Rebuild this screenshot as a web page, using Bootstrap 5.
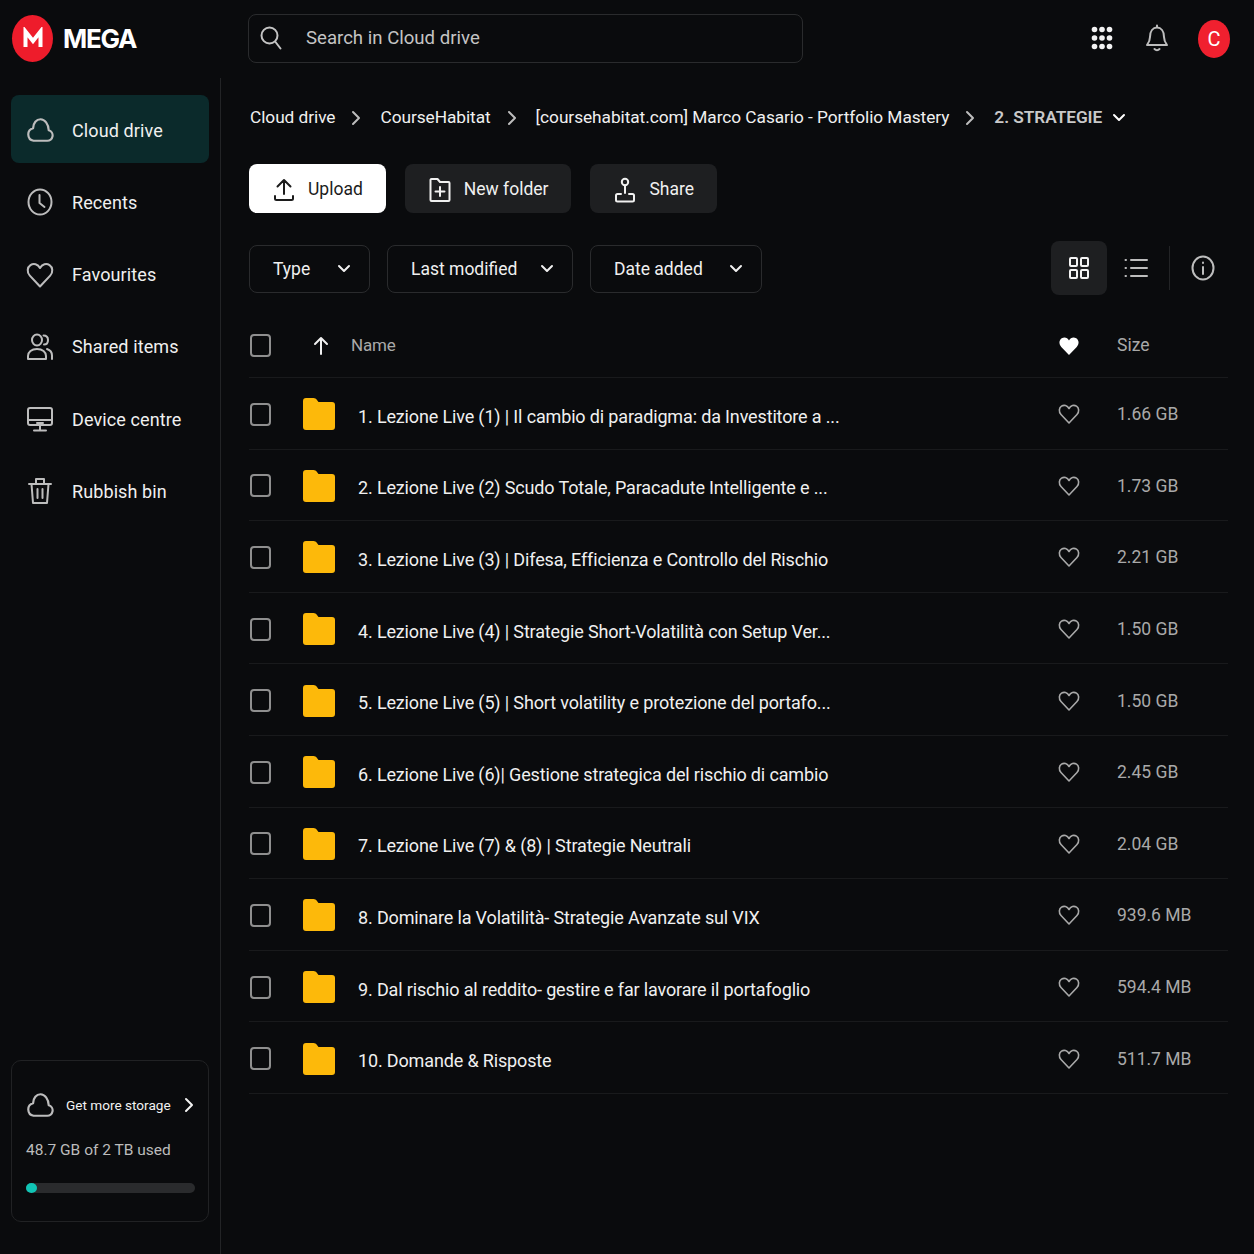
<!DOCTYPE html>
<html lang="en">
<head>
  <meta charset="UTF-8">
  <title>Cloud drive - MEGA</title>
  <link href="https://cdn.jsdelivr.net/npm/bootstrap@5.3.3/dist/css/bootstrap.min.css" rel="stylesheet">
  <style>
    body {
      font-family: Roboto, "Liberation Sans", sans-serif;
      background-color: #0a0b0d;
      color: #f0f0f0;
      font-size: 18px;
      height: 1254px;
      overflow: hidden;
    }
    svg { display: block; flex-shrink: 0; }
    .ic { fill: none; stroke: currentColor; stroke-width: 2; stroke-linecap: round; stroke-linejoin: round; }

    .top-bar { height: 78px; padding-bottom: 2px; }
    .logo-box { width: 248px; padding-left: 12px; }
    .logo-disc { width: 41px; height: 47px; border-radius: 50%; background: #ee1c2b; }
    .logo-word { font-family: Inter, sans-serif; font-size: 26px; font-weight: 700; letter-spacing: -1.2px; margin-left: 10px; color: #fff; }
    .search-box { width: 555px; height: 49px; border: 1px solid #2a2b2d; border-radius: 8px; padding-left: 11px; color: #c4c4c4; font-size: 18.6px; }
    .search-box span { margin-left: 24px; padding-top: 2px; }
    .top-icons { width: 451px; padding-right: 24px; color: #bdbdbd; }
    .avatar { width: 32px; height: 38px; border-radius: 50%; background: #f0202f; color: #fff; font-size: 20px; margin-left: 29px; margin-top: 2px; }

    .side-bar { width: 221px; height: 1176px; border-right: 1px solid #232426; padding: 17px 11px 32px; }
    .side-link { height: 68px; margin-bottom: 4.3px; border-radius: 8px; padding: 2px 0 0 15px; color: #f0f0f0; text-decoration: none; gap: 18px; letter-spacing: .1px; }
    .side-link svg { color: #bdbdbd; }
    .side-link.active-link { background: #0b2a2b; }
    .quota-box { height: 162px; border: 1px solid #212224; border-radius: 10px; padding: 30px 13px 0 14px; }
    .quota-more { font-size: 13.6px; color: #f2f2f2; gap: 12px; white-space: nowrap; }
    .quota-more svg:first-child { color: #bdbdbd; }
    .quota-used { font-size: 15.5px; color: #bcbcbc; margin-top: 20px; }
    .quota-track { height: 10px; border-radius: 5px; background: #2a2b2d; margin-top: 21px; }
    .quota-fill { width: 11px; height: 10px; border-radius: 50%; background: #10c5b5; }

    .main-col { padding: 0 26px 0 28px; }
    .crumbs { height: 80px; gap: 16px; font-size: 17.3px; letter-spacing: -.06px; padding: 0 0 1px 1px; }
    .crumbs svg { color: #bdbdbd; margin: 0 2px 0 -1px; }
    .crumbs svg:last-child { color: #fff; margin-left: -6px; }
    .crumb-last { font-weight: 600; color: #c9c9c9; }
    .act-row { gap: 19px; margin-top: 6px; }
    .act-btn { height: 49px; border: 0; border-radius: 8px; background: #1e1f21; color: #f0f0f0; font-size: 17.5px; gap: 13px; padding: 2px 23px 0 24px; }
    .act-btn.act-main { background: #fff; color: #1c1c1c; }
    .tool-row { margin-top: 28px; height: 54px; }
    .filter-btn { height: 48px; border: 1px solid #2a2b2d; border-radius: 8px; background: transparent; color: #f0f0f0; font-size: 17.5px; padding: 0 18px 0 23px; margin: 2px 17px 0 0; }
    .filter-type { width: 121px; }
    .filter-mod { width: 186px; }
    .filter-add { width: 172px; }
    .view-on { width: 56px; height: 54px; border-radius: 8px; background: #1e1f21; color: #f4f4f4; }
    .view-off { width: 58px; color: #bdbdbd; }
    .view-sep { width: 1px; height: 44px; background: #232426; margin-left: 4px; margin-right: 21px; }
    .info-ic { color: #bdbdbd; margin-right: 13px; }

    .file-head { height: 66px; margin-top: 17px; padding-top: 2px; border-bottom: 1px solid #191a1c; color: #a9a9a9; }
    .file-row { height: 71.6px; padding-top: 2px; border-bottom: 1px solid #191a1c; }
    .tick { width: 21px; height: 23px; border: 2px solid #8f8f8f; border-radius: 4px; flex-shrink: 0; margin-left: 1px; }
    .head-arrow { margin-left: 41px; color: #f0f0f0; }
    .folder-ic { margin-left: 32px; }
    .file-name { margin-left: 23px; flex-grow: 1; margin-top: 4px; letter-spacing: -.15px; }
    .file-head .file-name { margin: 0 0 0 21px; font-size: 17px; }
    .fav-ic { color: #a9a9a9; }
    .fav-ic.fav-on { color: #fff; margin: 0 1px; }
    .file-size { width: 111px; margin-left: 37px; color: #a9a9a9; font-size: 17.5px; }
  </style>
</head>
<body>

<svg width="0" height="0" class="position-absolute">
  <symbol id="cloud" viewBox="0 0 26 26"><path class="ic" d="M7 23h12.500a5 5 0 0 0 1.600-9.800C20.800 7.500 17.500 3 13.500 3 9.600 3 6.800 6.500 6.600 11.300A6 6 0 0 0 7 23z"/></symbol>
  <symbol id="chev-right" viewBox="0 0 12 16"><path class="ic" d="M3 2l6 6-6 6"/></symbol>
  <symbol id="chev-down" viewBox="0 0 14 10"><path class="ic" d="M2 2l5 5 5-5"/></symbol>
  <symbol id="heart" viewBox="0 0 22 22"><path class="ic" style="stroke-width:1.600" d="M11 20L3 11.500C.5 8.800 1 4.800 3.500 3.200 6 1.600 9.300 2.400 11 5.500 12.700 2.400 16 1.600 18.500 3.200 21 4.800 21.500 8.800 19 11.500z"/></symbol>
  <symbol id="folder" viewBox="0 0 32 32"><path fill="#fdb90a" d="M0 3a3 3 0 0 1 3-3h7.500c1.500 0 2.500.7 3.300 1.800L15.500 4H29a3 3 0 0 1 3 3v22a3 3 0 0 1-3 3H3a3 3 0 0 1-3-3z"/></symbol>
</svg>

<header class="top-bar d-flex align-items-center">
  <div class="logo-box d-flex align-items-center">
    <div class="logo-disc d-flex align-items-center justify-content-center">
      <svg width="22" height="22" viewBox="0 0 22 22"><path fill="none" stroke="#fff" stroke-width="4" d="M3.500 20V4.500L11 14l7.500-9.500V20"/></svg>
    </div>
    <span class="logo-word">MEGA</span>
  </div>
  <div class="search-box d-flex align-items-center">
    <svg class="ic" width="22" height="26" viewBox="0 0 22 26" preserveAspectRatio="none"><circle cx="9.500" cy="10.500" r="8"/><path d="M15.500 17l5 6.500"/></svg>
    <span>Search in Cloud drive</span>
  </div>
  <div class="top-icons d-flex align-items-center justify-content-end">
    <svg width="22" height="24" viewBox="0 0 22 24" fill="#f2f2f2" class="me-4">
      <circle cx="3.500" cy="3.500" r="2.800"/><circle cx="11" cy="3.500" r="2.800"/><circle cx="18.500" cy="3.500" r="2.800"/>
      <circle cx="3.500" cy="12" r="2.800"/><circle cx="11" cy="12" r="2.800"/><circle cx="18.500" cy="12" r="2.800"/>
      <circle cx="3.500" cy="20.500" r="2.800"/><circle cx="11" cy="20.500" r="2.800"/><circle cx="18.500" cy="20.500" r="2.800"/>
    </svg>
    <svg class="ic ms-2" width="24" height="28" viewBox="0 0 24 28"><path d="M12 1.500v2M5 13c0-6 3-9.500 7-9.500s7 3.500 7 9.500c0 4 1.500 6 3 8H2c1.500-2 3-4 3-8zM9.500 25c1.500 1.500 3.500 1.500 5 0"/></svg>
    <div class="avatar d-flex align-items-center justify-content-center">C</div>
  </div>
</header>

<div class="d-flex">
  <aside class="side-bar d-flex flex-column">
    <a href="#" class="side-link active-link d-flex align-items-center">
      <svg width="28" height="28"><use href="#cloud"/></svg>Cloud drive
    </a>
    <a href="#" class="side-link d-flex align-items-center">
      <svg class="ic" width="28" height="28" viewBox="0 0 28 28"><ellipse cx="14" cy="14" rx="11.500" ry="12.500"/><path d="M13.500 7v8l5 4"/></svg>Recents
    </a>
    <a href="#" class="side-link d-flex align-items-center">
      <svg width="28" height="28"><use href="#heart"/></svg>Favourites
    </a>
    <a href="#" class="side-link d-flex align-items-center">
      <svg class="ic" width="28" height="28" viewBox="0 0 28 28"><ellipse cx="11" cy="7" rx="5" ry="5.500"/><path d="M2 26v-3c0-4 3.500-7 9-7s9 3 9 7v3zM17.500 2.500c3 0 4.500 2 4.500 4.500s-1.500 4.500-4 4.500M21 16c3 1 5 3.500 5 6.500V26"/></svg>Shared items
    </a>
    <a href="#" class="side-link d-flex align-items-center">
      <svg class="ic" width="28" height="28" viewBox="0 0 28 28"><rect x="2" y="3" width="24" height="17" rx="2"/><path d="M2 15h24M14 20v5M8 25.500h12M11 18h6"/></svg>Device centre
    </a>
    <a href="#" class="side-link d-flex align-items-center">
      <svg class="ic" width="28" height="28" viewBox="0 0 28 28"><path d="M3 7h22M10 7V2h8v5M5.500 7l1.500 19h14l1.500-19M11.500 12v9M16.500 12v9"/></svg>Rubbish bin
    </a>
    <div class="quota-box mt-auto">
      <div class="quota-more d-flex align-items-center">
        <svg width="28" height="28"><use href="#cloud"/></svg>
        <span>Get more storage</span>
        <svg width="12" height="16"><use href="#chev-right"/></svg>
      </div>
      <div class="quota-used">48.7 GB of 2 TB used</div>
      <div class="quota-track"><div class="quota-fill"></div></div>
    </div>
  </aside>

  <main class="main-col flex-grow-1">
    <nav class="crumbs d-flex align-items-center">
      <span>Cloud drive</span><svg width="12" height="16"><use href="#chev-right"/></svg>
      <span>CourseHabitat</span><svg width="12" height="16"><use href="#chev-right"/></svg>
      <span>[coursehabitat.com] Marco Casario - Portfolio Mastery</span><svg width="12" height="16"><use href="#chev-right"/></svg>
      <span class="crumb-last">2. STRATEGIE</span><svg width="14" height="10"><use href="#chev-down"/></svg>
    </nav>

    <div class="act-row d-flex">
      <button class="act-btn act-main d-flex align-items-center">
        <svg class="ic" width="22" height="24" viewBox="0 0 22 24"><path d="M11 16V2M4.500 8.500L11 2l6.500 6.500M2 18v2.500c0 1 .5 1.500 1.500 1.500h15c1 0 1.500-.5 1.500-1.500V18"/></svg>Upload
      </button>
      <button class="act-btn d-flex align-items-center">
        <svg class="ic" width="22" height="26" viewBox="0 0 22 26"><path d="M1.500 3a1 1 0 0 1 1-1h6l2.500 3h8.500a1 1 0 0 1 1 1v17a1 1 0 0 1-1 1h-17a1 1 0 0 1-1-1zM11 10v9M6.500 14.500h9"/></svg>New folder
      </button>
      <button class="act-btn d-flex align-items-center">
        <svg class="ic" width="22" height="26" viewBox="0 0 22 26"><circle cx="11" cy="5" r="3.200"/><path d="M11 8.500V16M7 17H3.500C2.500 17 2 17.500 2 18.500V23c0 1 .5 1.500 1.500 1.500h15c1 0 1.500-.5 1.500-1.500v-4.500c0-1-.5-1.500-1.500-1.500H15"/></svg>Share
      </button>
    </div>

    <div class="tool-row d-flex align-items-center">
      <button class="filter-btn filter-type d-flex align-items-center justify-content-between">Type<svg width="14" height="10"><use href="#chev-down"/></svg></button>
      <button class="filter-btn filter-mod d-flex align-items-center justify-content-between">Last modified<svg width="14" height="10"><use href="#chev-down"/></svg></button>
      <button class="filter-btn filter-add d-flex align-items-center justify-content-between">Date added<svg width="14" height="10"><use href="#chev-down"/></svg></button>
      <div class="view-on ms-auto d-flex align-items-center justify-content-center">
        <svg class="ic" width="22" height="24" viewBox="0 0 22 24"><rect x="2" y="2" width="7" height="8" rx="1"/><rect x="13" y="2" width="7" height="8" rx="1"/><rect x="2" y="14" width="7" height="8" rx="1"/><rect x="13" y="14" width="7" height="8" rx="1"/></svg>
      </div>
      <div class="view-off d-flex align-items-center justify-content-center">
        <svg class="ic" width="24" height="22" viewBox="0 0 24 22"><path d="M7 3h16M7 11h16M7 19h16M1.500 3h.5M1.500 11h.5M1.500 19h.5"/></svg>
      </div>
      <div class="view-sep"></div>
      <svg class="ic info-ic" width="24" height="26" viewBox="0 0 24 26"><ellipse cx="12" cy="13" rx="10.500" ry="11.500"/><path d="M12 12v7M12 7.500v.5"/></svg>
    </div>

    <div class="file-head d-flex align-items-center">
      <span class="tick"></span>
      <svg class="ic head-arrow" width="18" height="20" viewBox="0 0 18 20"><path d="M9 18V2M3 8l6-6 6 6"/></svg>
      <span class="file-name">Name</span>
      <svg class="fav-ic fav-on" width="20" height="20" viewBox="0 0 22 22"><path fill="#fff" d="M11 21L2.500 12C-.5 8.800 0 4.500 3 2.500 6 .8 9.500 1.800 11 5c1.500-3.200 5-4.200 8-2.500 3 2 3.500 6.300.5 9.500z"/></svg>
      <span class="file-size">Size</span>
    </div>

    <div class="file-row d-flex align-items-center"><span class="tick"></span><svg class="folder-ic" width="32" height="32"><use href="#folder"/></svg><span class="file-name">1. Lezione Live (1) | Il cambio di paradigma: da Investitore a ...</span><svg class="fav-ic" width="22" height="22"><use href="#heart"/></svg><span class="file-size">1.66 GB</span></div>
    <div class="file-row d-flex align-items-center"><span class="tick"></span><svg class="folder-ic" width="32" height="32"><use href="#folder"/></svg><span class="file-name">2. Lezione Live (2) Scudo Totale, Paracadute Intelligente e ...</span><svg class="fav-ic" width="22" height="22"><use href="#heart"/></svg><span class="file-size">1.73 GB</span></div>
    <div class="file-row d-flex align-items-center"><span class="tick"></span><svg class="folder-ic" width="32" height="32"><use href="#folder"/></svg><span class="file-name">3. Lezione Live (3) | Difesa, Efficienza e Controllo del Rischio</span><svg class="fav-ic" width="22" height="22"><use href="#heart"/></svg><span class="file-size">2.21 GB</span></div>
    <div class="file-row d-flex align-items-center"><span class="tick"></span><svg class="folder-ic" width="32" height="32"><use href="#folder"/></svg><span class="file-name">4. Lezione Live (4) | Strategie Short-Volatilità con Setup Ver...</span><svg class="fav-ic" width="22" height="22"><use href="#heart"/></svg><span class="file-size">1.50 GB</span></div>
    <div class="file-row d-flex align-items-center"><span class="tick"></span><svg class="folder-ic" width="32" height="32"><use href="#folder"/></svg><span class="file-name">5. Lezione Live (5) | Short volatility e protezione del portafo...</span><svg class="fav-ic" width="22" height="22"><use href="#heart"/></svg><span class="file-size">1.50 GB</span></div>
    <div class="file-row d-flex align-items-center"><span class="tick"></span><svg class="folder-ic" width="32" height="32"><use href="#folder"/></svg><span class="file-name">6. Lezione Live (6)| Gestione strategica del rischio di cambio</span><svg class="fav-ic" width="22" height="22"><use href="#heart"/></svg><span class="file-size">2.45 GB</span></div>
    <div class="file-row d-flex align-items-center"><span class="tick"></span><svg class="folder-ic" width="32" height="32"><use href="#folder"/></svg><span class="file-name">7. Lezione Live (7) &amp; (8) | Strategie Neutrali</span><svg class="fav-ic" width="22" height="22"><use href="#heart"/></svg><span class="file-size">2.04 GB</span></div>
    <div class="file-row d-flex align-items-center"><span class="tick"></span><svg class="folder-ic" width="32" height="32"><use href="#folder"/></svg><span class="file-name">8. Dominare la Volatilità- Strategie Avanzate sul VIX</span><svg class="fav-ic" width="22" height="22"><use href="#heart"/></svg><span class="file-size">939.6 MB</span></div>
    <div class="file-row d-flex align-items-center"><span class="tick"></span><svg class="folder-ic" width="32" height="32"><use href="#folder"/></svg><span class="file-name">9. Dal rischio al reddito- gestire e far lavorare il portafoglio</span><svg class="fav-ic" width="22" height="22"><use href="#heart"/></svg><span class="file-size">594.4 MB</span></div>
    <div class="file-row d-flex align-items-center"><span class="tick"></span><svg class="folder-ic" width="32" height="32"><use href="#folder"/></svg><span class="file-name">10. Domande &amp; Risposte</span><svg class="fav-ic" width="22" height="22"><use href="#heart"/></svg><span class="file-size">511.7 MB</span></div>
  </main>
</div>

<script src="https://cdn.jsdelivr.net/npm/bootstrap@5.3.3/dist/js/bootstrap.bundle.min.js"></script>
</body>
</html>
